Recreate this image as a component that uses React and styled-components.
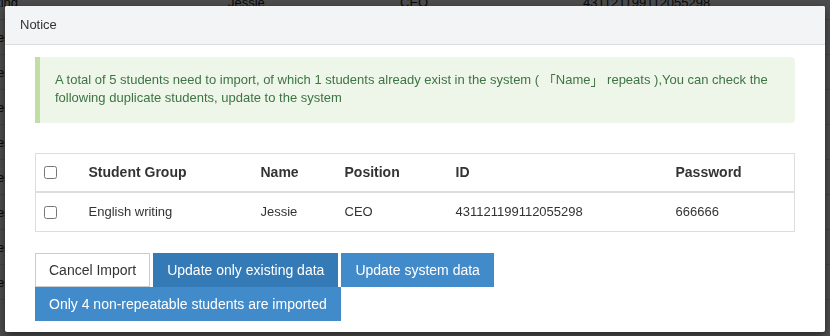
import styled, { createGlobalStyle } from 'styled-components';

const GlobalStyle = createGlobalStyle`
  html, body {
    margin: 0;
    padding: 0;
    background: #fff;
    font-family: "Liberation Sans", Arial, "Noto Sans CJK SC", sans-serif;
    font-size: 13px;
    color: #333;
  }
  * { box-sizing: border-box; }
`;

const pageRows = [
  ['English writing', 'Jessie', 'CEO', '431121199112055298'],
  ['Chinese', 'Tom', 'Teacher', '431121199010125511'],
  ['Chinese', 'Lucy', 'Teacher', '431121199205034428'],
  ['Chinese', 'Mike', 'Staff', '431121198911207735'],
  ['Chinese', 'Anna', 'Staff', '431121199307186624'],
  ['Chinese', 'Jack', 'Staff', '431121199102283317'],
  ['Chinese', 'Lily', 'Staff', '431121199409095546'],
  ['Chinese', 'Sam', 'Staff', '431121198808162213'],
  ['Chinese', 'Rose', 'Staff', '431121199512244420'],
];

const columns = [
  { key: 'check', width: 45 },
  { key: 'group', title: 'Student Group', width: 172 },
  { key: 'name', title: 'Name', width: 84 },
  { key: 'position', title: 'Position', width: 111 },
  { key: 'id', title: 'ID', width: 220 },
  { key: 'password', title: 'Password' },
];

const students = [
  {
    group: 'English writing',
    name: 'Jessie',
    position: 'CEO',
    id: '431121199112055298',
    password: '666666',
  },
];

const App = () => {
  return (
    <>
      <GlobalStyle />
      <Page>
        {pageRows.map((row, i) => (
          <PageRow key={i}>
            <PageCell $w={98} $align="right">{row[0]}</PageCell>
            <PageCell $w={210} />
            <PageCell $w={172}>{row[1]}</PageCell>
            <PageCell $w={183}>{row[2]}</PageCell>
            <PageCell>{row[3]}</PageCell>
          </PageRow>
        ))}
      </Page>

      <Backdrop />

      <Modal>
        <Header>Notice</Header>
        <Body>
          <Alert>
            A total of 5 students need to import, of which 1 students already
            exist in the system ( <Bracket>「</Bracket>Name<Bracket>」</Bracket>{' '}
            repeats ),You can check the following duplicate students, update to
            the system
          </Alert>

          <Table>
            <thead>
              <tr>
                {columns.map((col) => (
                  <Th key={col.key} $w={col.width}>
                    {col.key === 'check' ? <Check type="checkbox" /> : col.title}
                  </Th>
                ))}
              </tr>
            </thead>
            <tbody>
              {students.map((s) => (
                <tr key={s.id}>
                  {columns.map((col) => (
                    <Td key={col.key}>
                      {col.key === 'check' ? <Check type="checkbox" /> : s[col.key]}
                    </Td>
                  ))}
                </tr>
              ))}
            </tbody>
          </Table>

          <Actions>
            <Button $variant="default">Cancel Import</Button>
            <Button $variant="dark">Update only existing data</Button>
            <Button $variant="primary">Update system data</Button>
            <Button $variant="primary">Only 4 non-repeatable students are imported</Button>
          </Actions>
        </Body>
      </Modal>
    </>
  );
};

const Page = styled.div`
  margin: -15px 0 0 -80px;
  width: 1000px;
`;

const PageRow = styled.div`
  display: flex;
  height: 35px;
  align-items: center;
  border-bottom: 1px solid #ddd;
  color: #222;
`;

const PageCell = styled.div`
  flex: ${(p) => (p.$w ? `0 0 ${p.$w}px` : '1')};
  text-align: ${(p) => p.$align || 'left'};
  white-space: nowrap;
`;

const Backdrop = styled.div`
  position: fixed;
  inset: 0;
  background: rgba(0, 0, 0, 0.7);
`;

const Modal = styled.div`
  position: fixed;
  top: 6px;
  left: 5px;
  width: 820px;
  background: #fff;
  border-radius: 2px;
  box-shadow: 0 3px 9px rgba(0, 0, 0, 0.5);
  overflow: hidden;
`;

const Header = styled.div`
  height: 39px;
  padding: 9px 15px;
  line-height: 20px;
  background: #f3f4f6;
  border-bottom: 1px solid #ddd;
  color: #333;
`;

const Body = styled.div`
  padding: 12px 30px 11px;
`;

const Alert = styled.div`
  padding: 14px 15px 16px 15px;
  min-height: 66px;
  line-height: 18px;
  background: #eef6e9;
  border-left: 5px solid #c0dea6;
  border-radius: 0 4px 4px 0;
  color: #3e7344;
`;

const Bracket = styled.span`
  display: inline-block;
  width: 13px;
  overflow: hidden;
  font-family: "Noto Sans CJK SC", sans-serif;
  text-spacing-trim: space-all;
  text-align: center;
  vertical-align: top;
`;

const Table = styled.table`
  width: 100%;
  margin-top: 30px;
  border-collapse: collapse;
  border: 1px solid #ddd;
  color: #333;
`;

const Th = styled.th`
  width: ${(p) => (p.$w ? `${p.$w}px` : 'auto')};
  padding: 8px;
  line-height: 21px;
  font-size: 14px;
  text-align: left;
  font-weight: bold;
  border-bottom: 2px solid #ddd;
  vertical-align: middle;
`;

const Td = styled.td`
  padding: 8px;
  line-height: 22px;
  vertical-align: middle;
`;

const Check = styled.input`
  display: block;
  width: 13px;
  height: 13px;
  margin: 0;
`;

const variants = {
  default: { bg: '#fff', color: '#333', border: '#ccc' },
  dark: { bg: '#337ab7', color: '#fff', border: '#337ab7' },
  primary: { bg: '#428bca', color: '#fff', border: '#428bca' },
};

const Actions = styled.div`
  display: flex;
  flex-wrap: wrap;
  column-gap: 3px;
  margin-top: 21px;
`;

const Button = styled.button`
  padding: 6px 13px;
  line-height: 20px;
  font-family: inherit;
  font-size: 14px;
  background: ${(p) => variants[p.$variant].bg};
  color: ${(p) => variants[p.$variant].color};
  border: 1px solid ${(p) => variants[p.$variant].border};
  border-radius: 0;
  cursor: pointer;
`;

export default App;
